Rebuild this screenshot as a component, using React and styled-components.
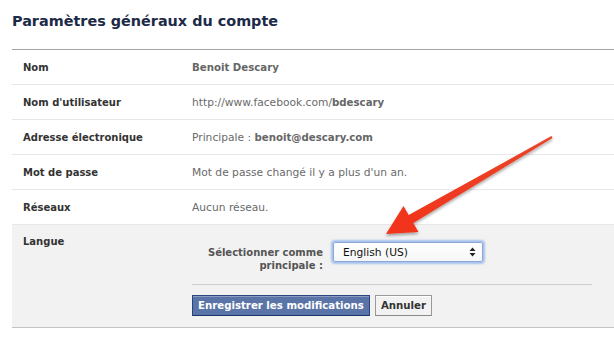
import React from 'react';
import styled, { createGlobalStyle } from 'styled-components';

const GlobalStyle = createGlobalStyle`
  body {
    margin: 0;
    background: #fff;
    font-family: 'DejaVu Sans', 'Liberation Sans', sans-serif;
    overflow: hidden;
  }
`;

const App = () => {
  const rows = [
    { label: 'Nom', value: <Strong>Benoit Descary</Strong> },
    { label: "Nom d'utilisateur", value: <>http://www.facebook.com/<Strong>bdescary</Strong></> },
    { label: 'Adresse électronique', value: <>Principale : <Strong>benoit@descary.com</Strong></> },
    { label: 'Mot de passe', value: "Mot de passe changé il y a plus d'un an." },
    { label: 'Réseaux', value: 'Aucun réseau.' },
  ];

  return (
    <>
      <GlobalStyle />
      <Page>
        <Title>Paramètres généraux du compte</Title>
        <Table>
          {rows.map((row) => (
            <Row key={row.label}>
              <Label>{row.label}</Label>
              <Value>{row.value}</Value>
            </Row>
          ))}
          <EditRow>
            <Label $top>Langue</Label>
            <EditBody>
              <Field>
                <FieldLabel>Sélectionner comme<br />principale :</FieldLabel>
                <Select>
                  <span>English (US)</span>
                  <svg width="7" height="10" viewBox="0 0 7 10">
                    <path d="M3.5 0.5 L6.5 4 L0.5 4 Z M3.5 9.5 L6.5 6 L0.5 6 Z" fill="#222" />
                  </svg>
                </Select>
              </Field>
              <Divider />
              <Buttons>
                <Button $primary>Enregistrer les modifications</Button>
                <Button>Annuler</Button>
              </Buttons>
            </EditBody>
          </EditRow>
        </Table>
        <Arrow width="614" height="337" viewBox="0 0 614 337">
          <defs>
            <linearGradient id="arrowFill" x1="552" y1="137" x2="386" y2="234" gradientUnits="userSpaceOnUse">
              <stop offset="0" stopColor="#e8452a" />
              <stop offset="1" stopColor="#f2331b" />
            </linearGradient>
            <filter id="arrowShadow" x="-10%" y="-10%" width="120%" height="130%">
              <feDropShadow dx="0" dy="2" stdDeviation="1.5" floodColor="#000" floodOpacity="0.35" />
            </filter>
          </defs>
          <path
            d="M552.6 137.9 L551.4 136.1 L408.7 215.1 L403.5 206 L386 234 L418.5 232 L413.3 222.9 Z"
            fill="url(#arrowFill)"
            filter="url(#arrowShadow)"
          />
        </Arrow>
      </Page>
    </>
  );
};

export default App;

const Page = styled.div`
  position: relative;
  width: 614px;
  height: 337px;
  padding-left: 12px;
  box-sizing: border-box;
`;

const Title = styled.h1`
  margin: 0;
  padding-top: 11px;
  height: 49px;
  box-sizing: border-box;
  font-size: 14.4px;
  font-weight: bold;
  color: #1c2a47;
  line-height: 20px;
`;

const Table = styled.div`
  border-top: 1px solid #a5a5a5;
  border-bottom: 1px solid #c4c4c4;
`;

const Row = styled.div`
  display: flex;
  align-items: center;
  height: 34px;
  border-bottom: 1px solid #e7e7e7;
  font-size: 10.7px;
`;

const Label = styled.div`
  width: 169px;
  padding-left: 11px;
  align-self: ${(p) => (p.$top ? 'flex-start' : 'center')};
  padding-top: ${(p) => (p.$top ? '11px' : '0')};
  font-weight: bold;
  color: #333;
  font-size: 10px;
`;

const Value = styled.div`
  color: #6a6a6a;
`;

const Strong = styled.b`
  color: #666;
  font-size: 10.2px;
`;

const EditRow = styled.div`
  display: flex;
  background: #f2f2f2;
  height: 102px;
`;

const EditBody = styled.div`
  width: 400px;
  padding-top: 17px;
  font-size: 10.5px;
`;

const Field = styled.div`
  display: flex;
  gap: 10px;
`;

const FieldLabel = styled.div`
  width: 131px;
  padding-top: 4px;
  text-align: right;
  line-height: 13px;
  font-size: 10px;
  font-weight: bold;
  color: #555;
`;

const Select = styled.div`
  width: 150px;
  height: 20px;
  box-sizing: border-box;
  display: flex;
  align-items: center;
  justify-content: space-between;
  padding: 0 6px 0 9px;
  background: linear-gradient(#fff, #f6f6f6);
  border: 1px solid #8ea7d2;
  border-radius: 2px;
  box-shadow: 0 0 2px 2px #a6c2ec;
  color: #111;
  font-size: 10.7px;
`;

const Divider = styled.div`
  height: 1px;
  background: #cfcfcf;
  margin-top: 12px;
`;

const Buttons = styled.div`
  display: flex;
  gap: 5px;
  margin-top: 10px;
`;

const Button = styled.button`
  height: 21px;
  padding: 0 5px;
  font-family: inherit;
  font-size: 10.2px;
  font-weight: bold;
  border: 1px solid ${(p) => (p.$primary ? '#29447e' : '#999')};
  border-bottom-color: ${(p) => (p.$primary ? '#1a356e' : '#888')};
  background: ${(p) => (p.$primary ? '#5b74a8' : '#f2f2f2')};
  color: ${(p) => (p.$primary ? '#fff' : '#333')};
  box-shadow: inset 0 1px 0 ${(p) => (p.$primary ? '#8a9cc2' : '#fff')};
`;

const Arrow = styled.svg`
  position: absolute;
  left: 0;
  top: 0;
  pointer-events: none;
`;
